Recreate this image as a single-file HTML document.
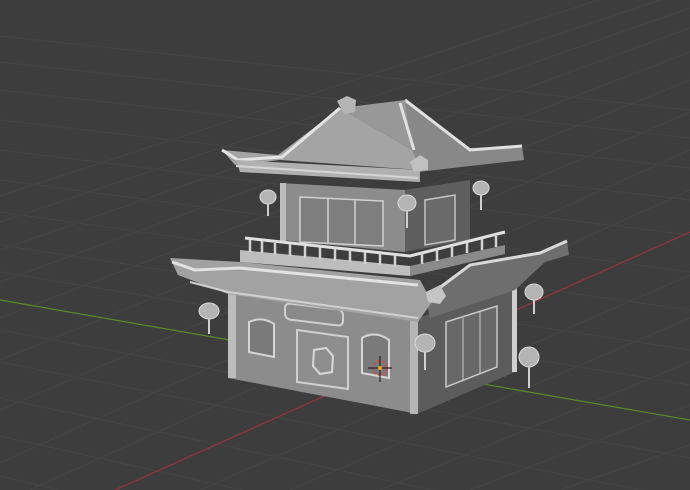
<!DOCTYPE html>
<html><head><meta charset="utf-8"><style>
html,body{margin:0;padding:0;background:#3d3d3d;overflow:hidden;width:690px;height:490px}
svg{display:block}
</style></head><body>
<svg width="690" height="490" viewBox="0 0 690 490" xmlns="http://www.w3.org/2000/svg">
<rect width="690" height="490" fill="#3d3d3d"/>
<g stroke="#454545" stroke-width="1" fill="none">
<path d="M0 120 L690 200"/><path d="M0 150 L690 235"/><path d="M0 180 L690 272"/>
<path d="M0 212 L690 310"/><path d="M0 245 L690 350"/><path d="M0 272 L690 385"/>
<path d="M0 330 L690 458"/><path d="M0 362 L690 500"/><path d="M0 398 L690 545"/>
<path d="M0 436 L690 590"/><path d="M0 476 L690 640"/><path d="M0 90 L690 168"/>
<path d="M0 62 L690 138"/><path d="M0 36 L690 110"/>
<path d="M-60 490 L690 150"/><path d="M0 410 L690 112"/><path d="M0 360 L690 80"/>
<path d="M0 318 L690 52"/><path d="M0 282 L690 28"/><path d="M0 250 L690 8"/>
<path d="M30 490 L690 190"/><path d="M200 490 L690 275"/><path d="M290 490 L690 318"/>
<path d="M380 490 L690 362"/><path d="M470 490 L690 405"/><path d="M560 490 L690 445"/>
<path d="M0 222 L690 -10"/><path d="M0 196 L690 -30"/>
</g>
<line x1="0" y1="300" x2="690" y2="420" stroke="#5a8a2a" stroke-width="1.2"/>
<line x1="115" y1="490" x2="690" y2="232" stroke="#9a3340" stroke-width="1.2"/>

<polygon points="417,318 515,288 515,372 417,414" fill="#5c5c5c"/>
<polygon points="446,322 497,306 497,367 446,387" fill="#686868" stroke="#c8c8c8" stroke-width="1.5"/>
<line x1="463" y1="318" x2="463" y2="381" stroke="#c8c8c8"/><line x1="480" y1="312" x2="480" y2="374" stroke="#c8c8c8"/>
<rect x="512" y="288" width="5" height="84" fill="#cfcfcf"/>
<polygon points="228,292 418,318 418,414 228,378" fill="#8c8c8c"/>
<rect x="228" y="292" width="8" height="86" fill="#bdbdbd"/>
<rect x="410" y="318" width="8" height="96" fill="#b5b5b5"/>
<path d="M249 322 Q262 316 274 324 L274 357 L249 352 Z" fill="#7a7a7a" stroke="#d5d5d5" stroke-width="2"/>
<path d="M362 338 Q375 330 389 340 L389 378 L362 373 Z" fill="#7a7a7a" stroke="#d5d5d5" stroke-width="2"/>
<polygon points="297,330 348,337 348,389 297,382" fill="#8e8e8e" stroke="#d0d0d0" stroke-width="2"/>
<polygon points="314,350 326,348 333,356 332,372 320,374 313,366" fill="none" stroke="#d8d8d8" stroke-width="2"/>
<rect x="285" y="304" width="58" height="16" rx="5" fill="#8a8a8a" stroke="#d0d0d0" stroke-width="2" transform="skewY(7) translate(0,-36)"/>
<circle cx="380" cy="368" r="7" fill="none" stroke="#e04040" stroke-width="1.5" stroke-dasharray="3 2"/>
<line x1="380" y1="356" x2="380" y2="382" stroke="#111"/><line x1="368" y1="368" x2="392" y2="368" stroke="#111"/>
<circle cx="380" cy="368" r="2" fill="#f0a020"/>

<polygon points="425,296 470,264 540,252 567,241 569,255 545,262 515,290 430,318" fill="#6e6e6e"/>
<path d="M430 295 L470 265 L540 253 L567 241" stroke="#d8d8d8" stroke-width="3" fill="none"/>
<polygon points="170,258 240,262 420,280 432,302 418,322 228,294 178,275" fill="#a2a2a2"/>
<path d="M172 262 L195 270 L240 268 L418 285" stroke="#e2e2e2" stroke-width="3" fill="none"/>
<path d="M190 282 L228 292 L418 318" stroke="#d0d0d0" stroke-width="2" fill="none"/>
<polygon points="426,292 440,285 446,296 440,304 428,302" fill="#c5c5c5"/>

<polygon points="405,190 470,180 470,240 405,252" fill="#5e5e5e"/>
<polygon points="425,200 455,195 455,240 425,245" fill="#6a6a6a" stroke="#c5c5c5" stroke-width="1.5"/>
<polygon points="280,183 405,190 405,252 280,240" fill="#8c8c8c"/>
<rect x="280" y="183" width="6" height="58" fill="#bcbcbc"/>
<polygon points="300,197 383,201 383,246 300,242" fill="#7e7e7e" stroke="#d0d0d0" stroke-width="1.5"/>
<line x1="328" y1="198" x2="328" y2="244" stroke="#d0d0d0" stroke-width="1.5"/><line x1="355" y1="200" x2="355" y2="245" stroke="#d0d0d0" stroke-width="1.5"/>
<polygon points="240,250 410,266 410,276 240,262" fill="#bdbdbd"/>
<polygon points="410,266 505,245 505,254 410,276" fill="#8a8a8a"/>
<polyline points="245,238 410,256 505,232" fill="none" stroke="#e0e0e0" stroke-width="3"/>
<g stroke="#d2d2d2" stroke-width="2.5">
<line x1="250" y1="240" x2="250" y2="252"/><line x1="262" y1="241" x2="262" y2="253"/><line x1="275" y1="243" x2="275" y2="255"/><line x1="290" y1="244" x2="290" y2="256"/><line x1="305" y1="246" x2="305" y2="258"/><line x1="320" y1="247" x2="320" y2="259"/><line x1="335" y1="249" x2="335" y2="261"/><line x1="350" y1="250" x2="350" y2="262"/><line x1="365" y1="252" x2="365" y2="264"/><line x1="380" y1="253" x2="380" y2="265"/><line x1="395" y1="255" x2="395" y2="267"/>
<line x1="422" y1="253" x2="422" y2="264"/><line x1="437" y1="250" x2="437" y2="261"/><line x1="452" y1="246" x2="452" y2="257"/><line x1="467" y1="242" x2="467" y2="253"/><line x1="482" y1="239" x2="482" y2="250"/><line x1="496" y1="236" x2="496" y2="247"/>
</g>

<polygon points="405,100 470,148 522,146 524,160 470,166 418,172 412,150" fill="#888888"/>
<path d="M405 100 L470 150 L522 146" stroke="#e0e0e0" stroke-width="3" fill="none"/>
<polygon points="340,108 412,150 420,170 280,160 235,165 222,150 278,155" fill="#a4a4a4"/>
<polygon points="340,108 405,100 412,150" fill="#989898"/>
<path d="M222 150 L238 160 L282 157 L340 108" stroke="#e4e4e4" stroke-width="3" fill="none"/>
<polygon points="236,160 420,170 420,182 240,172" fill="#b0b0b0"/>
<path d="M236 166 L418 178" stroke="#d5d5d5" stroke-width="2"/>
<polygon points="337,101 347,96 356,100 355,112 344,114" fill="#b5b5b5"/>
<polygon points="410,162 420,155 428,160 428,170 414,172" fill="#c0c0c0"/>
<path d="M400 103 L414 150" stroke="#e0e0e0" stroke-width="3"/>

<g fill="#b4b4b4" stroke="#dadada" stroke-width="1">
<ellipse cx="268" cy="197" rx="8" ry="7"/><ellipse cx="407" cy="203" rx="9" ry="8"/><ellipse cx="481" cy="188" rx="8" ry="7"/>
<ellipse cx="209" cy="311" rx="10" ry="8"/><ellipse cx="425" cy="343" rx="10" ry="9"/><ellipse cx="534" cy="292" rx="9" ry="8"/><ellipse cx="529" cy="357" rx="10" ry="10"/>
</g>
<g stroke="#cfcfcf" stroke-width="2">
<line x1="268" y1="204" x2="268" y2="216"/><line x1="407" y1="211" x2="407" y2="228"/><line x1="481" y1="195" x2="481" y2="210"/>
<line x1="209" y1="319" x2="209" y2="334"/><line x1="425" y1="352" x2="425" y2="370"/><line x1="534" y1="300" x2="534" y2="314"/><line x1="529" y1="367" x2="529" y2="388"/>
</g>
</svg>
</body></html>
